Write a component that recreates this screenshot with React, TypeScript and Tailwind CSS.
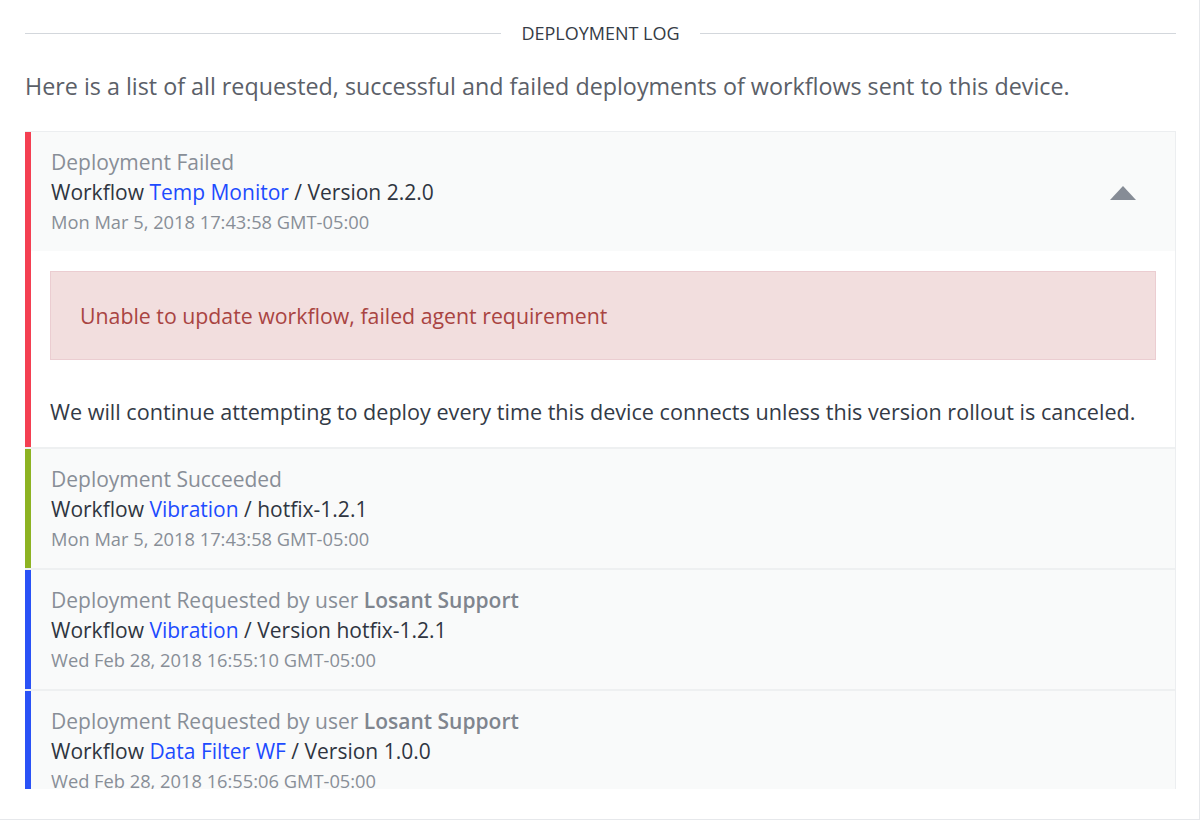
import React from "react";

type Entry = {
  id: number;
  bar: string;
  title: React.ReactNode;
  workflow: string;
  version: string;
  date: string;
  expanded?: boolean;
};

const entries: Entry[] = [
  {
    id: 1,
    bar: "border-l-[#f43f52]",
    title: "Deployment Failed",
    workflow: "Temp Monitor",
    version: "Version 2.2.0",
    date: "Mon Mar 5, 2018 17:43:58 GMT-05:00",
    expanded: true,
  },
  {
    id: 2,
    bar: "border-l-[#8db322]",
    title: "Deployment Succeeded",
    workflow: "Vibration",
    version: "hotfix-1.2.1",
    date: "Mon Mar 5, 2018 17:43:58 GMT-05:00",
  },
  {
    id: 3,
    bar: "border-l-[#2a52f6]",
    title: (
      <>
        Deployment Requested by user <span className="font-semibold text-[#7f858e]">Losant Support</span>
      </>
    ),
    workflow: "Vibration",
    version: "Version hotfix-1.2.1",
    date: "Wed Feb 28, 2018 16:55:10 GMT-05:00",
  },
  {
    id: 4,
    bar: "border-l-[#2a52f6]",
    title: (
      <>
        Deployment Requested by user <span className="font-semibold text-[#7f858e]">Losant Support</span>
      </>
    ),
    workflow: "Data Filter WF",
    version: "Version 1.0.0",
    date: "Wed Feb 28, 2018 16:55:06 GMT-05:00",
  },
];

const App = () => {
  return (
    <div
      className="w-[1200px] h-[820px] bg-white border-r border-b border-[#e6e8eb] overflow-hidden"
      style={{ fontFamily: '"Open Sans", sans-serif' }}
    >
      <div className="pl-[25px] pr-[23px]">
        {/* Section title */}
        <div className="flex items-center gap-[20px] h-[34px] pt-[16px] box-content">
          <div className="flex-1 h-px bg-[#d3d7dc]" />
          <span className="text-[18px] leading-[24px] text-[#363c46]">DEPLOYMENT LOG</span>
          <div className="flex-1 h-px bg-[#d3d7dc]" />
        </div>

        <p className="mt-[20px] text-[23.3px] leading-[32px] text-[#5b6068]">
          Here is a list of all requested, successful and failed deployments of workflows sent to this device.
        </p>

        {/* Log list */}
        <div className="mt-[29px] h-[658px] overflow-hidden border-t border-r border-[#eceef0] bg-[#eef0f1] flex flex-col gap-[2px]">
          {entries.map((entry) => (
            <div key={entry.id} className={`border-l-[6px] ${entry.bar} bg-white shrink-0`}>
              <div className="bg-[#f9fafa] h-[119px] pl-[20px] pr-[39px] flex items-center justify-between">
                <div>
                  <div className="text-[21px] leading-[30px] text-[#888e97]">{entry.title}</div>
                  <div className="text-[21px] leading-[30px] text-[#2f3541]">
                    Workflow <span className="text-[#1d4bff]">{entry.workflow}</span> / {entry.version}
                  </div>
                  <div className="text-[18.3px] leading-[30px] text-[#888e97]">{entry.date}</div>
                </div>
                {entry.expanded && (
                  <svg width="26" height="14" viewBox="0 0 26 14" className="mt-[3px]">
                    <polygon points="13,0 26,14 0,14" fill="#868c96" />
                  </svg>
                )}
              </div>
              {entry.expanded && (
                <div className="pt-[20px] pb-[20px] pl-[19px] pr-[19px]">
                  <div className="bg-[#f2dede] border border-[#ebcdd1] pl-[29px] py-[28px] text-[21.3px] leading-[31px] text-[#a94442]">
                    Unable to update workflow, failed agent requirement
                  </div>
                  <p className="mt-[37px] text-[21.6px] leading-[30px] text-[#333a46]">
                    We will continue attempting to deploy every time this device connects unless this version rollout is canceled.
                  </p>
                </div>
              )}
            </div>
          ))}
        </div>
      </div>
    </div>
  );
};

export default App;
